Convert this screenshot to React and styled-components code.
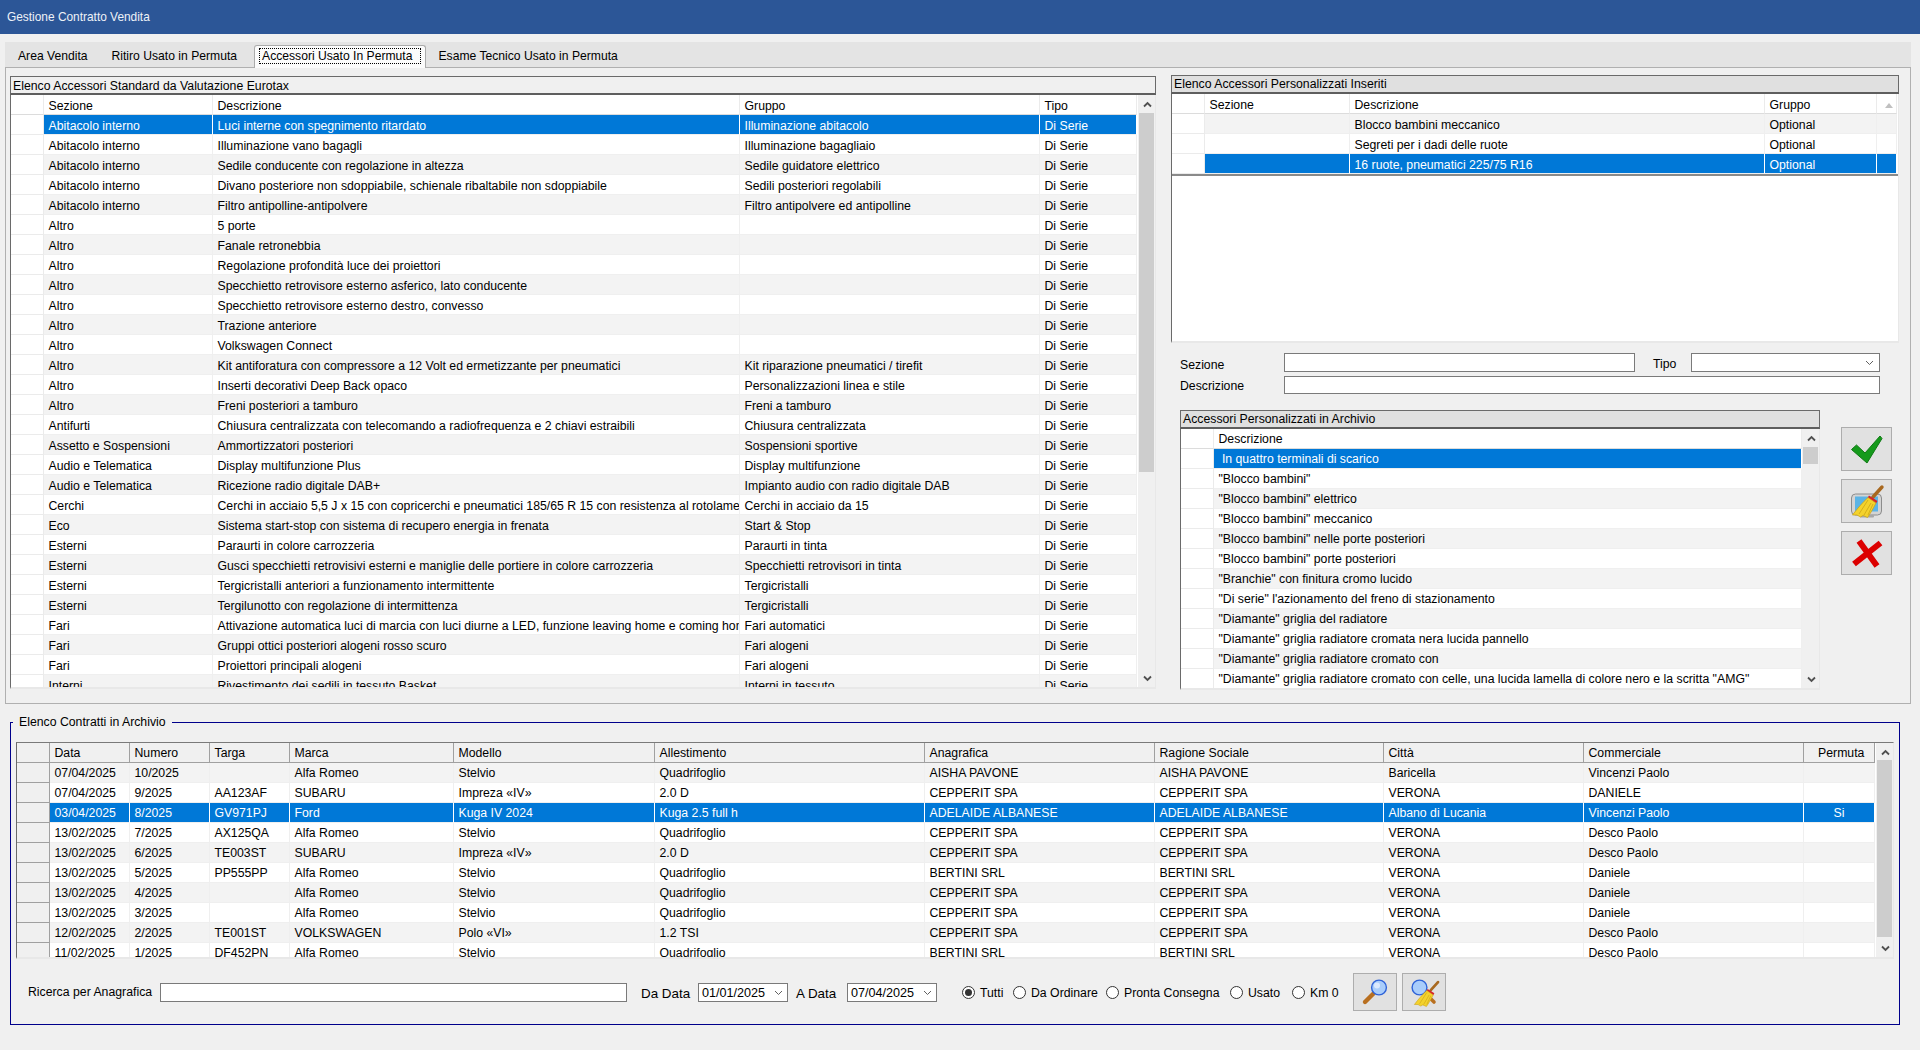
import styled, { createGlobalStyle } from 'styled-components'

const GlobalStyle = createGlobalStyle`
  html, body {
    margin: 0;
    padding: 0;
    background: #f0f0f0;
    font-family: "Liberation Sans", Arial, sans-serif;
    font-size: 12.27px;
    color: #000;
  }
  * { box-sizing: border-box; }
`

const accessori = [
  ['Abitacolo interno', 'Luci interne con spegnimento ritardato', 'Illuminazione abitacolo'],
  ['Abitacolo interno', 'Illuminazione vano bagagli', 'Illuminazione bagagliaio'],
  ['Abitacolo interno', 'Sedile conducente con regolazione in altezza', 'Sedile guidatore elettrico'],
  ['Abitacolo interno', 'Divano posteriore non sdoppiabile, schienale ribaltabile non sdoppiabile', 'Sedili posteriori regolabili'],
  ['Abitacolo interno', 'Filtro antipolline-antipolvere', 'Filtro antipolvere ed antipolline'],
  ['Altro', '5 porte', ''],
  ['Altro', 'Fanale retronebbia', ''],
  ['Altro', 'Regolazione profondità luce dei proiettori', ''],
  ['Altro', 'Specchietto retrovisore esterno asferico, lato conducente', ''],
  ['Altro', 'Specchietto retrovisore esterno destro, convesso', ''],
  ['Altro', 'Trazione anteriore', ''],
  ['Altro', 'Volkswagen Connect', ''],
  ['Altro', 'Kit antiforatura con compressore a 12 Volt ed ermetizzante per pneumatici', 'Kit riparazione pneumatici / tirefit'],
  ['Altro', 'Inserti decorativi Deep Back opaco', 'Personalizzazioni linea e stile'],
  ['Altro', 'Freni posteriori a tamburo', 'Freni a tamburo'],
  ['Antifurti', 'Chiusura centralizzata con telecomando a radiofrequenza e 2 chiavi estraibili', 'Chiusura centralizzata'],
  ['Assetto e Sospensioni', 'Ammortizzatori posteriori', 'Sospensioni sportive'],
  ['Audio e Telematica', 'Display multifunzione Plus', 'Display multifunzione'],
  ['Audio e Telematica', 'Ricezione radio digitale DAB+', 'Impianto audio con radio digitale DAB'],
  ['Cerchi', 'Cerchi in acciaio 5,5 J x 15 con copricerchi e pneumatici 185/65 R 15 con resistenza al rotolamento ridotta', 'Cerchi in acciaio da 15'],
  ['Eco', 'Sistema start-stop con sistema di recupero energia in frenata', 'Start & Stop'],
  ['Esterni', 'Paraurti in colore carrozzeria', 'Paraurti in tinta'],
  ['Esterni', 'Gusci specchietti retrovisivi esterni e maniglie delle portiere in colore carrozzeria', 'Specchietti retrovisori in tinta'],
  ['Esterni', 'Tergicristalli anteriori a funzionamento intermittente', 'Tergicristalli'],
  ['Esterni', 'Tergilunotto con regolazione di intermittenza', 'Tergicristalli'],
  ['Fari', 'Attivazione automatica luci di marcia con luci diurne a LED, funzione leaving home e coming home', 'Fari automatici'],
  ['Fari', 'Gruppi ottici posteriori alogeni rosso scuro', 'Fari alogeni'],
  ['Fari', 'Proiettori principali alogeni', 'Fari alogeni'],
  ['Interni', 'Rivestimento dei sedili in tessuto Basket', 'Interni in tessuto'],
].map((r) => ['', ...r, 'Di Serie'])

const inseriti = [
  ['', '', 'Blocco bambini meccanico', 'Optional', ''],
  ['', '', 'Segreti per i dadi delle ruote', 'Optional', ''],
  ['', '', '16 ruote, pneumatici 225/75 R16', 'Optional', ''],
]

const archivio = [
  ' In quattro terminali di scarico',
  '"Blocco bambini"',
  '"Blocco bambini" elettrico',
  '"Blocco bambini" meccanico',
  '"Blocco bambini" nelle porte posteriori',
  '"Blocco bambini" porte posteriori',
  '"Branchie" con finitura cromo lucido',
  '"Di serie" l\'azionamento del freno di stazionamento',
  '"Diamante" griglia del radiatore',
  '"Diamante" griglia radiatore cromata nera lucida pannello',
  '"Diamante" griglia radiatore cromato con',
  '"Diamante" griglia radiatore cromato con celle, una lucida lamella di colore nero e la scritta "AMG"',
].map((d) => ['', d])

const cepperit = ['CEPPERIT SPA', 'CEPPERIT SPA', 'VERONA']
const bertini = ['BERTINI SRL', 'BERTINI SRL', 'VERONA']
const stelvio = ['Alfa Romeo', 'Stelvio', 'Quadrifoglio']

const contratti = [
  ['', '07/04/2025', '10/2025', '', ...stelvio, 'AISHA PAVONE', 'AISHA PAVONE', 'Baricella', 'Vincenzi Paolo', ''],
  ['', '07/04/2025', '9/2025', 'AA123AF', 'SUBARU', 'Impreza «IV»', '2.0 D', ...cepperit, 'DANIELE', ''],
  ['', '03/04/2025', '8/2025', 'GV971PJ', 'Ford', 'Kuga IV 2024', 'Kuga 2.5 full h', 'ADELAIDE ALBANESE', 'ADELAIDE ALBANESE', 'Albano di Lucania', 'Vincenzi Paolo', 'Si'],
  ['', '13/02/2025', '7/2025', 'AX125QA', ...stelvio, ...cepperit, 'Desco Paolo', ''],
  ['', '13/02/2025', '6/2025', 'TE003ST', 'SUBARU', 'Impreza «IV»', '2.0 D', ...cepperit, 'Desco Paolo', ''],
  ['', '13/02/2025', '5/2025', 'PP555PP', ...stelvio, ...bertini, 'Daniele', ''],
  ['', '13/02/2025', '4/2025', '', ...stelvio, ...cepperit, 'Daniele', ''],
  ['', '13/02/2025', '3/2025', '', ...stelvio, ...cepperit, 'Daniele', ''],
  ['', '12/02/2025', '2/2025', 'TE001ST', 'VOLKSWAGEN', 'Polo «VI»', '1.2 TSI', ...cepperit, 'Desco Paolo', ''],
  ['', '11/02/2025', '1/2025', 'DF452PN', ...stelvio, ...bertini, 'Desco Paolo', ''],
]

function Broom({ transform }) {
  return (
    <g transform={transform}>
      <path d="M40 7 L31 17" stroke="#a8681f" strokeWidth="3.4" strokeLinecap="round" />
      <path d="M27 15.5 L35.5 21 L34 23.5 L25.5 18 Z" fill="#d8232a" />
      <path d="M26 17.5 L34 23 C31 29 28 34 25.5 37.5 L21 35.5 L18.5 37 L15 35 L10.5 35 C15 29 21 22 26 17.5 Z" fill="#f4d22c" stroke="#c9a013" strokeWidth=".7" />
      <path d="M26 20 L17 34 M29 23 L22 35 M31 24 L26 35" stroke="#c9a013" strokeWidth=".7" />
    </g>
  )
}

function CheckIcon() {
  return (
    <svg width="49" height="42" viewBox="0 0 49 42">
      <path d="M9.5 21.5 L14.5 17 L23 25 L38 8 L40 10.5 L25 35 Z" fill="#159a1c" stroke="#0f7a14" strokeWidth="1" strokeLinejoin="round" />
    </svg>
  )
}

function CrossIcon() {
  return (
    <svg width="49" height="42" viewBox="0 0 49 42">
      <path d="M17 9 L35 34 M38.5 11 L12 32" stroke="#dc0000" strokeWidth="6" />
    </svg>
  )
}

function CleanIcon() {
  return (
    <svg width="49" height="42" viewBox="0 0 49 42">
      <rect x="9.5" y="14" width="30" height="21" rx="4" fill="#d4d4d4" stroke="#8c8c8c" />
      <rect x="13" y="16.5" width="23" height="15" fill="#5bb4e6" />
      <rect x="18" y="35" width="14" height="2.5" rx="1" fill="#a8a8a8" />
      <Broom />
    </svg>
  )
}

function SearchIcon() {
  return (
    <svg width="42" height="36" viewBox="0 0 42 36">
      <path d="M19 20 L11 28" stroke="#b86f20" strokeWidth="4.4" strokeLinecap="round" />
      <circle cx="25" cy="13.5" r="7.4" fill="#a9cdfb" stroke="#2f63d8" strokeWidth="1.4" />
      <circle cx="23" cy="11.5" r="3" fill="#dbe9fe" />
    </svg>
  )
}

function SearchCleanIcon() {
  return (
    <svg width="42" height="36" viewBox="0 0 42 36">
      <path d="M25 22 L31 28" stroke="#b86f20" strokeWidth="3.6" strokeLinecap="round" />
      <circle cx="16.5" cy="13.5" r="7.4" fill="#a9cdfb" stroke="#2f63d8" strokeWidth="1.4" />
      <Broom transform="translate(3 2.5) scale(.8)" />
    </svg>
  )
}

function Chevron({ size = 9 }) {
  return (
    <svg width={size} height="6" viewBox="0 0 9 6">
      <path d="M1 1 L4.5 4.5 L8 1" fill="none" stroke="#606060" strokeWidth="1" />
    </svg>
  )
}

function ScrollArrow({ down }) {
  return (
    <svg width="9" height="7" viewBox="0 0 9 7">
      <path d={down ? 'M1 1.5 L4.5 5 L8 1.5' : 'M1 5.5 L4.5 2 L8 5.5'} fill="none" stroke="#505050" strokeWidth="1.8" />
    </svg>
  )
}

function DataGrid({ cols, columns, rows, selected, shaded, scroll, align = {}, height, textTop = 2 }) {
  return (
    <GridFrame $shaded={shaded} $height={height}>
      <GridBody>
        <Row $cols={cols}>
          {columns.map((c, i) => (
            <HeadCell key={i} $shaded={shaded} $top={textTop} $center={align[i] === 'center'}>
              {c === '^' ? <SortMark /> : c}
            </HeadCell>
          ))}
        </Row>
        {rows.map((r, ri) => (
          <Row $cols={cols} key={ri}>
            {r.map((v, ci) => (
              ci === 0
                ? <RowHead key={ci} $shaded={shaded} />
                : <Cell key={ci} $top={textTop} $selected={ri === selected} $alt={ri % 2 === 0} $center={align[ci] === 'center'}>{v}</Cell>
            ))}
          </Row>
        ))}
        {!scroll && <GridEnd />}
      </GridBody>
      {scroll && (
        <ScrollBar>
          <ScrollButton><ScrollArrow /></ScrollButton>
          <ScrollTrack>
            <ScrollThumb $height={scroll} $shaded={shaded} />
          </ScrollTrack>
          <ScrollButton><ScrollArrow down /></ScrollButton>
        </ScrollBar>
      )}
    </GridFrame>
  )
}

const radios = ['Tutti', 'Da Ordinare', 'Pronta Consegna', 'Usato', 'Km 0']

export default function App() {
  return (
    <Page>
      <GlobalStyle />
      <TitleBar>Gestione Contratto Vendita</TitleBar>

      <TabsWrap>
        <TabStrip>
          <Tab>Area Vendita</Tab>
          <Tab>Ritiro Usato in Permuta</Tab>
          <ActiveTab><FocusBox>Accessori Usato In Permuta</FocusBox></ActiveTab>
          <Tab>Esame Tecnico Usato in Permuta</Tab>
        </TabStrip>

        <TabPanel>
          <LeftColumn>
            <GroupHeader>Elenco Accessori Standard da Valutazione Eurotax</GroupHeader>
            <DataGrid
              cols="33px 169px 527px 300px 97px"
              columns={['', 'Sezione', 'Descrizione', 'Gruppo', 'Tipo']}
              rows={accessori}
              selected={0}
              scroll={359}
              height={594}
            />
          </LeftColumn>

          <RightColumn>
            <GroupHeader $dark>Elenco Accessori Personalizzati Inseriti</GroupHeader>
            <DataGrid
              cols="33px 145px 415px 112px 20px"
              columns={['', 'Sezione', 'Descrizione', 'Gruppo', '^']}
              rows={inseriti}
              selected={2}
              height={249}
            />

            <FormGrid>
              <FormLabel>Sezione</FormLabel>
              <TextBox />
              <TipoLabel>Tipo</TipoLabel>
              <SelectBox><Chevron /></SelectBox>
              <FormLabel $second>Descrizione</FormLabel>
              <WideTextBox />
            </FormGrid>

            <ArchiveRow>
              <ArchiveBlock>
                <GroupHeader $dark>Accessori Personalizzati in Archivio</GroupHeader>
                <DataGrid
                  cols="33px 588px"
                  columns={['', 'Descrizione']}
                  rows={archivio}
                  selected={0}
                  scroll={17}
                  textTop={1}
                  height={261}
                />
              </ArchiveBlock>
              <ActionColumn>
                <ActionButton><CheckIcon /></ActionButton>
                <ActionButton><CleanIcon /></ActionButton>
                <ActionButton><CrossIcon /></ActionButton>
              </ActionColumn>
            </ArchiveRow>
          </RightColumn>
        </TabPanel>
      </TabsWrap>

      <ContractsGroup>
        <ContractsLegend>Elenco Contratti in Archivio</ContractsLegend>
        <DataGrid
          shaded
          cols="33px 80px 80px 80px 164px 201px 270px 230px 229px 200px 220px 71px"
          columns={['', 'Data', 'Numero', 'Targa', 'Marca', 'Modello', 'Allestimento', 'Anagrafica', 'Ragione Sociale', 'Città', 'Commerciale', 'Permuta']}
          rows={contratti}
          selected={2}
          scroll={177}
          textTop={1}
          align={{ 11: 'center' }}
          height={217}
        />

        <SearchBar>
          <SearchLabel>Ricerca per Anagrafica</SearchLabel>
          <SearchInput />
          <DateLabel>Da Data</DateLabel>
          <DateBox>01/01/2025<Chevron /></DateBox>
          <DateLabel>A Data</DateLabel>
          <DateBox>07/04/2025<Chevron /></DateBox>
          <RadioGroup>
            {radios.map((r, i) => (
              <RadioOption key={r}>
                <RadioDot $checked={i === 0} />
                {r}
              </RadioOption>
            ))}
          </RadioGroup>
          <SearchButtons>
            <SmallButton><SearchIcon /></SmallButton>
            <SmallButton><SearchCleanIcon /></SmallButton>
          </SearchButtons>
        </SearchBar>
      </ContractsGroup>
    </Page>
  )
}

const Page = styled.div`
  width: 1920px;
  height: 1050px;
  overflow: hidden;
  background: #f0f0f0;
`

const TitleBar = styled.div`
  height: 34px;
  padding-left: 7px;
  background: #2c5697;
  color: #eef2f8;
  font-size: 11.9px;
  line-height: 34px;
`

const TabsWrap = styled.div`
  margin: 8px 9px 0 5px;
`

const TabStrip = styled.div`
  display: flex;
  align-items: flex-end;
  height: 25px;
  padding-left: 2px;
  font-size: 12.15px;
  background: #e4e4e4;
`

const Tab = styled.div`
  height: 21px;
  padding: 0 13px 0 11px;
  line-height: 21px;
  white-space: nowrap;
`

const ActiveTab = styled.div`
  position: relative;
  z-index: 1;
  height: 23px;
  margin: 0 2px -1px 4px;
  padding: 2px 4px 0;
  background: #fbfbfb;
  border: 1px solid #ababab;
  border-bottom: 0;
  border-radius: 3px 3px 0 0;
`

const FocusBox = styled.div`
  height: 16px;
  padding: 0 7px 0 2px;
  line-height: 14px;
  border: 1px dotted #000;
  white-space: nowrap;
`

const TabPanel = styled.div`
  display: flex;
  gap: 15px;
  height: 637px;
  padding: 7px 0 0 4px;
  border: 1px solid #b0b0b0;
  background: #f0f0f0;
`

const LeftColumn = styled.div`
  width: 1146px;
  margin-top: 1px;
`

const RightColumn = styled.div`
  width: 728px;
`

const GroupHeader = styled.div`
  height: 19px;
  padding-left: 2px;
  line-height: ${(p) => (p.$dark ? '17px' : '18px')};
  white-space: nowrap;
  background: ${(p) => (p.$dark ? '#e0e0e0' : '#f0f0f0')};
  border: 1px solid #6a6a6a;
  border-bottom-width: 2px;
  border-bottom-color: #5e5e5e;
`

const GridFrame = styled.div`
  display: flex;
  height: ${(p) => p.$height}px;
  background: #fff;
  border-left: 1px solid #6a6a6a;
  border-right: 1px solid #e8e8e8;
  border-bottom: 2px solid #e8e8e8;
  border-top: ${(p) => (p.$shaded ? '1px solid #7a7a7a' : '0')};
`

const GridBody = styled.div`
  flex: 1;
  min-width: 0;
  overflow: hidden;
`

const Row = styled.div`
  display: grid;
  grid-template-columns: ${(p) => p.$cols};
  height: 20px;
`

const HeadCell = styled.div`
  display: flex;
  align-items: center;
  justify-content: ${(p) => (p.$center ? 'center' : 'flex-start')};
  padding: ${(p) => p.$top * 2 - 1}px 0 0 4.5px;
  overflow: hidden;
  white-space: nowrap;
  background: ${(p) => (p.$shaded ? '#f0f0f0' : '#fff')};
  border-right: 1px solid ${(p) => (p.$shaded ? '#a0a0a0' : '#ebebeb')};
  border-bottom: 1px solid ${(p) => (p.$shaded ? '#a0a0a0' : '#dcdcdc')};
`

const RowHead = styled.div`
  background: ${(p) => (p.$shaded ? '#f0f0f0' : '#fff')};
  border-right: 1px solid ${(p) => (p.$shaded ? '#a0a0a0' : '#ebebeb')};
  border-bottom: 1px solid ${(p) => (p.$shaded ? '#a0a0a0' : '#ebebeb')};
`

const Cell = styled.div`
  padding: ${(p) => p.$top}px 0 0 ${(p) => (p.$center ? '0' : '4.5px')};
  line-height: 18px;
  overflow: hidden;
  white-space: pre;
  text-align: ${(p) => (p.$center ? 'center' : 'left')};
  color: ${(p) => (p.$selected ? '#fff' : '#000')};
  background: ${(p) => (p.$selected ? '#0078d7' : p.$alt ? '#f3f3f3' : '#fff')};
  border-right: 1px solid ${(p) => (p.$selected ? '#fff' : '#efefef')};
  border-bottom: 1px solid #efefef;
`

const GridEnd = styled.div`
  height: 0;
  border-top: 2px solid #8a8a8a;
`

const SortMark = styled.span`
  width: 0;
  height: 0;
  margin-left: 3px;
  border-left: 4px solid transparent;
  border-right: 4px solid transparent;
  border-bottom: 5px solid #c0c0c0;
`

const ScrollBar = styled.div`
  display: flex;
  flex-direction: column;
  width: 17px;
  padding-left: 1px;
  background: #f0f0f0;
`

const ScrollButton = styled.div`
  display: flex;
  align-items: center;
  justify-content: center;
  flex: none;
  height: 18px;
`

const ScrollTrack = styled.div`
  flex: 1;
`

const ScrollThumb = styled.div`
  width: 15px;
  height: ${(p) => p.$height}px;
  margin-top: ${(p) => (p.$shaded ? '-1px' : '0')};
  background: #cdcdcd;
`

const FormGrid = styled.div`
  display: grid;
  grid-template-columns: 104px 351px 56px 189px;
  grid-template-rows: 19px 18px;
  row-gap: 4px;
  align-items: center;
  margin: 10px 0 0 9px;
`

const FormLabel = styled.div`
  padding-top: ${(p) => (p.$second ? '2px' : '4px')};
`

const TipoLabel = styled.div`
  padding-left: 18px;
  padding-top: 2px;
`

const TextBox = styled.div`
  height: 100%;
  background: #fff;
  border: 1px solid #7a7a7a;
`

const WideTextBox = styled(TextBox)`
  grid-column: 2 / 5;
`

const SelectBox = styled(TextBox)`
  display: flex;
  align-items: center;
  justify-content: flex-end;
  padding-right: 5px;
`

const ArchiveRow = styled.div`
  display: flex;
  gap: 21px;
  margin: 16px 0 0 9px;
`

const ArchiveBlock = styled.div`
  width: 640px;
`

const ActionColumn = styled.div`
  display: flex;
  flex-direction: column;
  gap: 8px;
  padding-top: 17px;
`

const ActionButton = styled.div`
  display: flex;
  align-items: center;
  justify-content: center;
  width: 51px;
  height: 44px;
  background: #e1e1e1;
  border: 1px solid #adadad;
`

const ContractsGroup = styled.fieldset`
  width: 1890px;
  height: 310px;
  margin: 11px 0 0 10px;
  padding: 13px 5px 0;
  border: 1px solid #00008b;
`

const ContractsLegend = styled.legend`
  margin-left: -3px;
  padding: 0 6px;
  line-height: 14px;
`

const SearchBar = styled.div`
  display: flex;
  align-items: center;
  height: 38px;
  margin-top: 14px;
  padding-left: 12px;
`

const SearchLabel = styled.div`
  width: 132px;
  white-space: nowrap;
`

const SearchInput = styled.div`
  width: 467px;
  height: 19px;
  background: #fff;
  border: 1px solid #7a7a7a;
`

const DateLabel = styled.div`
  margin-left: 14px;
  width: 57px;
  font-size: 13.4px;
  padding-top: 3px;
  white-space: nowrap;

  & + div + & {
    margin-left: 8px;
    width: 51px;
  }
`

const DateBox = styled.div`
  display: flex;
  align-items: center;
  justify-content: space-between;
  width: 90px;
  height: 19px;
  padding: 2px 4px 0 3px;
  font-size: 12.6px;
  background: #fff;
  border: 1px solid #7a7a7a;
`

const RadioGroup = styled.div`
  display: grid;
  grid-template-columns: 51px 93px 124px 62px 61px;
  margin-left: 25px;
  padding-top: 1px;
`

const RadioOption = styled.div`
  display: flex;
  align-items: center;
  gap: 5px;
  white-space: nowrap;
`

const RadioDot = styled.span`
  display: flex;
  align-items: center;
  justify-content: center;
  width: 13px;
  height: 13px;
  background: #fff;
  border: 1px solid #333;
  border-radius: 50%;

  &::after {
    content: '';
    width: 7px;
    height: 7px;
    border-radius: 50%;
    background: ${(p) => (p.$checked ? '#333' : 'transparent')};
  }
`

const SearchButtons = styled.div`
  display: flex;
  gap: 5px;
`

const SmallButton = styled.div`
  display: flex;
  align-items: center;
  justify-content: center;
  width: 44px;
  height: 38px;
  background: #e1e1e1;
  border: 1px solid #adadad;
`
